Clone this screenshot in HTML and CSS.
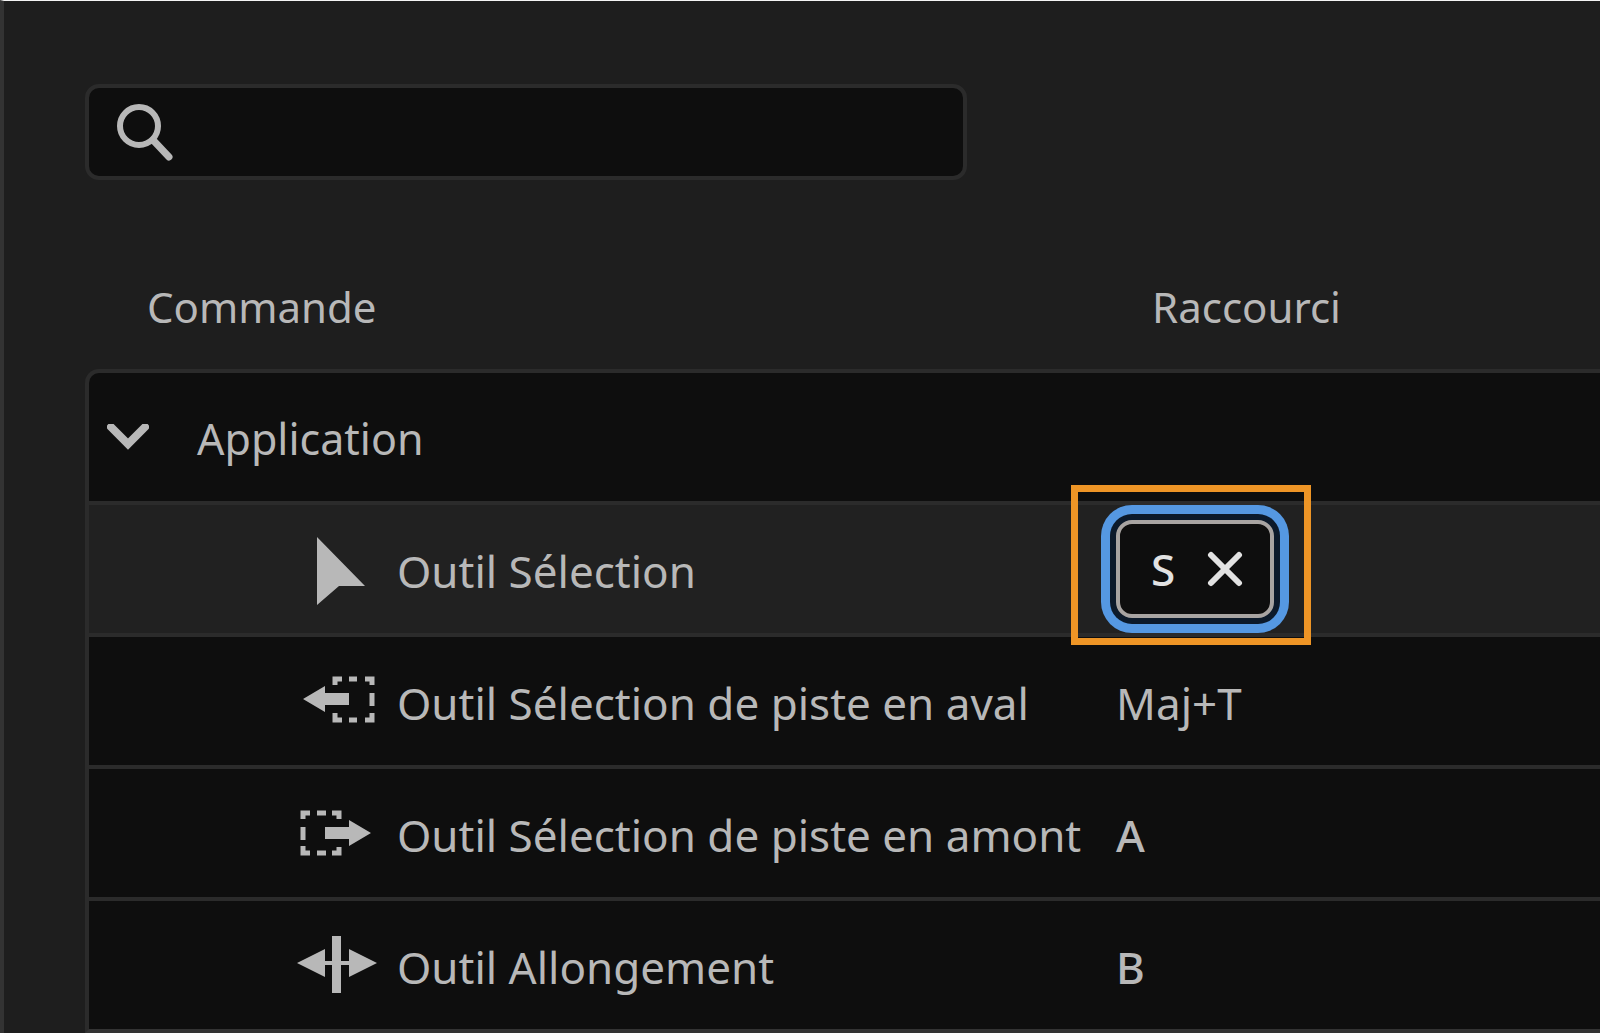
FILE: index.html
```html
<!DOCTYPE html>
<html lang="fr">
<head>
<meta charset="utf-8">
<meta name="viewport" content="width=device-width, initial-scale=1">
<title>Raccourcis clavier</title>
<link rel="stylesheet" href="styles.css">
</head>
<body>
<main class="panel">
  <label class="search">
    <svg class="search-icon" viewBox="0 0 60 60" aria-hidden="true">
      <circle cx="22" cy="24" r="19" fill="none" stroke="currentColor" stroke-width="6"/>
      <path d="M36 38 52 55" fill="none" stroke="currentColor" stroke-width="7" stroke-linecap="round"/>
    </svg>
    <input class="search-input" type="search" aria-label="Rechercher">
  </label>

  <table class="shortcuts">
    <colgroup>
      <col class="col-command">
      <col>
    </colgroup>
    <thead>
      <tr>
        <th scope="col">Commande</th>
        <th scope="col" class="head-key">Raccourci</th>
      </tr>
    </thead>
    <tbody>
      <tr>
        <td class="group" colspan="2">
          <div class="command">
            <button class="toggle" type="button" aria-label="Réduire Application" aria-expanded="true">
              <svg class="chevron" viewBox="0 0 42 30" aria-hidden="true">
                <path d="M4 3 21 20 38 3" fill="none" stroke="currentColor" stroke-width="8" stroke-linecap="round"/>
              </svg>
            </button>
            <span>Application</span>
          </div>
        </td>
      </tr>
      <tr class="selected">
        <td>
          <div class="command tool">
            <svg class="tool-icon" viewBox="0 0 80 80" aria-hidden="true">
              <path d="M20 6V74L42 55H68Z" fill="currentColor"/>
            </svg>
            <span>Outil Sélection</span>
          </div>
        </td>
        <td class="key">
          <div class="key-field">
            <input class="key-input" type="text" value="S" aria-label="Raccourci de Outil Sélection">
            <button class="clear" type="button" aria-label="Supprimer le raccourci">
              <svg class="cross" viewBox="0 0 36 36" aria-hidden="true">
                <path d="M4 4 32 32M32 4 4 32" fill="none" stroke="currentColor" stroke-width="6" stroke-linecap="round"/>
              </svg>
            </button>
            <span class="highlight" aria-hidden="true"></span>
          </div>
        </td>
      </tr>
      <tr>
        <td>
          <div class="command tool">
            <svg class="tool-icon" viewBox="0 0 80 80" aria-hidden="true">
              <path d="M6 36 28 23V30H52V42H28V49Z" fill="currentColor"/>
              <path d="M38 22V16H45M52 16H60M68 16H75V22M75 30V43M75 50V57H68M60 57H52M45 57H38V50" fill="none" stroke="currentColor" stroke-width="5"/>
            </svg>
            <span>Outil Sélection de piste en aval</span>
          </div>
        </td>
        <td class="key">Maj+T</td>
      </tr>
      <tr>
        <td>
          <div class="command tool">
            <svg class="tool-icon" viewBox="0 0 80 80" aria-hidden="true">
              <path d="M74 38 52 25V32H28V44H52V51Z" fill="currentColor"/>
              <path d="M42 24V18H35M29 18H20M13 18H6V24M6 32V45M6 51V58H13M20 58H29M35 58H42V52" fill="none" stroke="currentColor" stroke-width="5"/>
            </svg>
            <span>Outil Sélection de piste en amont</span>
          </div>
        </td>
        <td class="key letter">A</td>
      </tr>
      <tr>
        <td>
          <div class="command tool">
            <svg class="tool-icon" viewBox="0 0 80 80" aria-hidden="true">
              <path d="M0 36 28 22V34H35V9H44V34H52V22L80 36 52 50V38H44V66H35V38H28V50Z" fill="currentColor"/>
            </svg>
            <span>Outil Allongement</span>
          </div>
        </td>
        <td class="key letter">B</td>
      </tr>
    </tbody>
  </table>
</main>
</body>
</html>
```
FILE: styles.css
```css
:root {
  --surface: #1e1e1e;
  --well: #0e0e0e;
  --line: #2b2b2b;
  --text: #b8b8b8;
}

* {
  box-sizing: border-box;
}

body {
  margin: 0;
  background: var(--surface);
  color: var(--text);
  font-family: "Noto Sans", "Open Sans", sans-serif;
  font-size: 44px;
  line-height: 60px;
}

.panel {
  min-height: 100vh;
  padding: 83px 0 0 81px;
  border-top: 1px solid #f4f4f4;
  border-left: 4px solid #333;
  overflow: hidden;
}

.search {
  display: flex;
  align-items: center;
  gap: 16px;
  width: 100%;
  max-width: 882px;
  height: 96px;
  padding: 0 24px 0 28px;
  border: 4px solid var(--line);
  border-radius: 14px;
  background: var(--well);
}

.search-icon {
  flex: none;
  width: 60px;
  height: 60px;
}

.search-input {
  flex: 1;
  min-width: 0;
  border: 0;
  outline: 0;
  background: none;
  color: inherit;
  font: inherit;
  appearance: none;
}

.shortcuts {
  width: 100%;
  table-layout: fixed;
  border-collapse: separate;
  border-spacing: 0;
  white-space: nowrap;
}

.col-command {
  width: 67%;
}

th {
  height: 189px;
  padding: 64px 0 0 62px;
  font-size: 42px;
  font-weight: 400;
  text-align: left;
}

th.head-key {
  padding-left: 52px;
}

td {
  height: 132px;
  padding: 4px 0 0;
  border-top: 4px solid var(--line);
  background: var(--well);
}

td:first-child {
  border-left: 4px solid var(--line);
}

tr:last-child td {
  height: 136px;
  border-bottom: 4px solid #333;
}

td.group {
  border-top-left-radius: 14px;
  font-size: 43px;
}

.selected td {
  background: #212121;
}

.command {
  display: flex;
  align-items: center;
  gap: 48px;
  padding-left: 18px;
}

.tool {
  gap: 20px;
  padding-left: 208px;
}

.toggle,
.clear {
  display: flex;
  padding: 0;
  border: 0;
  background: none;
  color: inherit;
}

.chevron {
  width: 42px;
  height: 30px;
}

.tool-icon {
  flex: none;
  width: 80px;
  height: 80px;
}

td.key {
  padding-left: 16px;
}

.selected td.key {
  padding-top: 0;
}

.letter {
  font-weight: 500;
}

.key-field {
  position: relative;
  z-index: 1;
  display: flex;
  align-items: center;
  gap: 20px;
  width: 158px;
  height: 98px;
  padding-left: 31px;
  border: 4px solid #a8a4a2;
  border-radius: 16px;
  background: var(--well);
  box-shadow: 0 0 0 6px #0c1a2b, 0 0 0 15px #5598e2;
  color: #e2e2e2;
}

.key-input {
  width: 36px;
  padding: 0;
  border: 0;
  outline: 0;
  background: none;
  color: inherit;
  font: inherit;
  font-weight: 500;
}

.cross {
  width: 36px;
  height: 36px;
}

.highlight {
  position: absolute;
  inset: -39px -41px -31px -49px;
  border: 7px solid #ee9526;
  pointer-events: none;
}
```
